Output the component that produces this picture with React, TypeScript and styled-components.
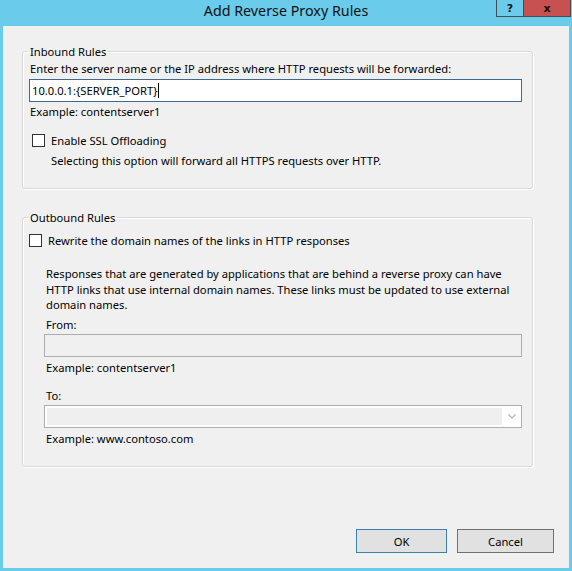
import styled, { createGlobalStyle } from "styled-components";

const GlobalStyle = createGlobalStyle`
  html, body {
    margin: 0;
    padding: 0;
    background: #6bcbeb;
  }
  * {
    box-sizing: border-box;
  }
`;

const Window = styled.div`
  width: 572px;
  height: 571px;
  background: #6bcbeb;
  display: flex;
  flex-direction: column;
  font-family: "Noto Sans", "Open Sans", sans-serif;
  font-size: 11.2px;
  color: #000;
`;

const TitleBar = styled.div`
  height: 26px;
  display: grid;
  grid-template-columns: 1fr auto 1fr;
  align-items: start;
`;

const Title = styled.div`
  grid-column: 2;
  line-height: 22px;
  font-size: 14.3px;
  color: #111;
`;

const Caption = styled.div`
  grid-column: 3;
  justify-self: end;
  display: flex;
  margin-right: 1px;
`;

const CaptionButton = styled.div<{ $close?: boolean }>`
  width: ${(p) => (p.$close ? "47px" : "28px")};
  height: 17px;
  border: 1px solid #3e4f58;
  border-top: none;
  border-left-width: ${(p) => (p.$close ? "0" : "1px")};
  background: ${(p) => (p.$close ? "#c75050" : "transparent")};
  display: flex;
  align-items: center;
  justify-content: center;
  font-family: "DejaVu Sans", sans-serif;
  font-weight: bold;
  font-size: 11px;
  color: #111;
`;

const Body = styled.div`
  flex: 1;
  margin: 0 3px 3px;
  background: #f0f0f0;
  display: flex;
  flex-direction: column;
  padding: 18px 36px 15px 19px;
`;

const Group = styled.fieldset<{ $h: number }>`
  margin: 0;
  padding: 0;
  min-width: 0;
  height: ${(p) => p.$h}px;
  border: 1px solid #d9d9d9;
  border-radius: 3px;
  box-shadow: 1px 1px 0 #fff, inset 1px 1px 0 #fff;
`;

const Legend = styled.legend`
  margin-left: 5px;
  padding: 0 2px;
  line-height: 15px;
`;

const GroupContent = styled.div`
  display: flex;
  flex-direction: column;
  padding: 1px 10px 0 6px;
`;

const Line = styled.div<{ $top?: number; $indent?: number }>`
  line-height: 15px;
  margin-top: ${(p) => p.$top ?? 0}px;
  padding-left: ${(p) => (p.$indent ?? 0) + 1}px;
  white-space: nowrap;
`;

const Paragraph = styled.div<{ $top?: number; $indent?: number }>`
  line-height: 15.5px;
  margin-top: ${(p) => p.$top ?? 0}px;
  padding-left: ${(p) => p.$indent ?? 0}px;
  white-space: nowrap;
`;

const TextBox = styled.div<{ $indent?: number; $top?: number; $active?: boolean }>`
  height: 23px;
  margin-top: ${(p) => p.$top ?? 0}px;
  margin-left: ${(p) => p.$indent ?? 0}px;
  border: 1px solid ${(p) => (p.$active ? "#3d6a8e" : "#adadad")};
  background: ${(p) => (p.$active ? "#fff" : "#f0f0f0")};
  display: flex;
  align-items: center;
  padding-left: 2px;
  line-height: 15px;
`;

const Caret = styled.span`
  display: inline-block;
  width: 1px;
  height: 15px;
  background: #000;
  margin-left: 1px;
`;

const Combo = styled.div<{ $indent?: number; $top?: number }>`
  height: 23px;
  margin-top: ${(p) => p.$top ?? 0}px;
  margin-left: ${(p) => p.$indent ?? 0}px;
  border: 1px solid #adadad;
  background: #fff;
  display: flex;
  padding: 2px 0 2px 2px;
`;

const ComboField = styled.div`
  flex: 1;
  background: #efefef;
`;

const ComboArrow = styled.div`
  width: 19px;
  display: flex;
  align-items: center;
  justify-content: center;
`;

const CheckRow = styled.label<{ $top?: number; $indent?: number }>`
  display: flex;
  align-items: center;
  gap: 6px;
  height: 15px;
  margin-top: ${(p) => p.$top ?? 0}px;
  padding-left: ${(p) => p.$indent ?? 0}px;
  line-height: 15px;
`;

const CheckBox = styled.span`
  width: 13px;
  height: 13px;
  border: 1px solid #333;
  background: #fff;
  flex-shrink: 0;
`;

const Spacer = styled.div<{ $h: number }>`
  height: ${(p) => p.$h}px;
  flex-shrink: 0;
`;

const Footer = styled.div`
  margin-top: auto;
  display: flex;
  justify-content: flex-end;
  gap: 10px;
  margin-right: -21px;
`;

const Button = styled.div<{ $w: number; $default?: boolean }>`
  width: ${(p) => p.$w}px;
  height: 24px;
  border: 1px solid ${(p) => (p.$default ? "#3c7fb1" : "#707070")};
  background: #e1e1e1;
  display: flex;
  align-items: center;
  justify-content: center;
`;

export default function App() {
  return (
    <>
      <GlobalStyle />
      <Window>
        <TitleBar>
          <Title>Add Reverse Proxy Rules</Title>
          <Caption>
            <CaptionButton>?</CaptionButton>
            <CaptionButton $close>x</CaptionButton>
          </Caption>
        </TitleBar>
        <Body>
          <Group $h={145}>
            <Legend>Inbound Rules</Legend>
            <GroupContent>
              <Line $top={1}>Enter the server name or the IP address where HTTP requests will be forwarded:</Line>
              <TextBox $top={3} $active>
                10.0.0.1:{"{"}SERVER_PORT{"}"}
                <Caret />
              </TextBox>
              <Line $top={2}>Example: contentserver1</Line>
              <CheckRow $top={14} $indent={3}>
                <CheckBox />
                Enable SSL Offloading
              </CheckRow>
              <Line $top={5} $indent={21}>
                Selecting this option will forward all HTTPS requests over HTTP.
              </Line>
            </GroupContent>
          </Group>
          <Spacer $h={21} />
          <Group $h={257}>
            <Legend>Outbound Rules</Legend>
            <GroupContent>
              <CheckRow $top={7}>
                <CheckBox />
                Rewrite the domain names of the links in HTTP responses
              </CheckRow>
              <Paragraph $top={18} $indent={17}>
                Responses that are generated by applications that are behind a reverse proxy can have
                <br />
                HTTP links that use internal domain names. These links must be updated to use external
                <br />
                domain names.
              </Paragraph>
              <Line $top={4} $indent={16}>From:</Line>
              <TextBox $top={2} $indent={15} />
              <Line $top={3} $indent={16}>Example: contentserver1</Line>
              <Line $top={13} $indent={16}>To:</Line>
              <Combo $top={2} $indent={15}>
                <ComboField />
                <ComboArrow>
                  <svg width="8" height="5" viewBox="0 0 8 5">
                    <path d="M0.5 0.5 L4 4 L7.5 0.5" fill="none" stroke="#b5b5b5" strokeWidth="1.2" />
                  </svg>
                </ComboArrow>
              </Combo>
              <Line $top={3} $indent={16}>Example: www.contoso.com</Line>
            </GroupContent>
          </Group>
          <Footer>
            <Button $w={91} $default>OK</Button>
            <Button $w={97}>Cancel</Button>
          </Footer>
        </Body>
      </Window>
    </>
  );
}
